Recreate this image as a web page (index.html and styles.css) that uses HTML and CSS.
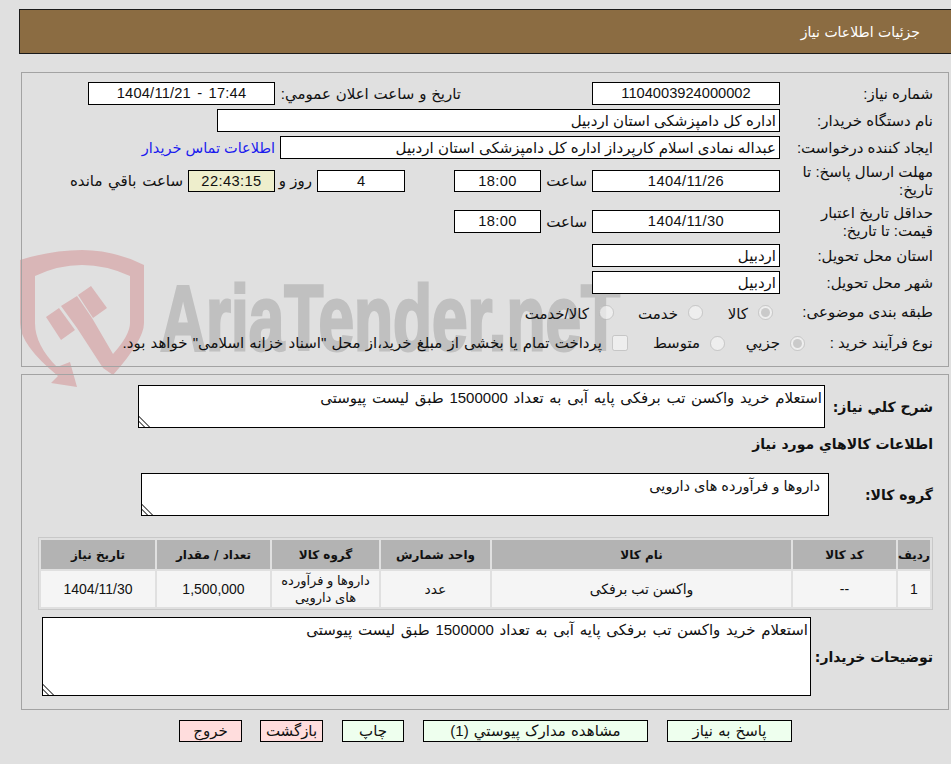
FILE: index.html
```html
<!DOCTYPE html>
<html lang="fa" dir="rtl">
<head>
<meta charset="utf-8">
<title>جزئیات اطلاعات نیاز</title>
<link rel="stylesheet" href="styles.css">
</head>
<body>
<svg class="watermark" width="640" height="160" viewBox="0 240 640 160" aria-hidden="true">
  <g class="wm-shield">
    <path fill-rule="evenodd" d="M20 260 Q52 250 82 250 Q114 250 144 265 V323 Q144 340 113 375 L103 368 L77 328 L61 306 L77 296 L92 318 L113 354 Q130 335 130 323 V276 Q106 265 82 265 Q58 265 35 276 V323 Q35 345 57 367 L70 362 L77 387 L51 383 L58 376 Q20 345 20 323 Z"/>
    <path d="M46 317 L59 308 L75 330 L61 340Z"/>
    <path d="M78 295 L91 286 L107 308 L93 318Z"/>
  </g>
  <text class="wm-text" x="160" y="350" textLength="460" lengthAdjust="spacingAndGlyphs">AriaTender.neT</text>
</svg>

<header class="page-head">جزئیات اطلاعات نیاز</header>

<section class="panel panel-info">
  <div class="row h27">
    <span class="lbl">شماره نیاز:</span>
    <span class="box w188 num">1104003924000002</span>
    <span class="lbl-announce">تاریخ و ساعت اعلان عمومي:</span>
    <span class="box w187 num stamp" dir="ltr">1404/11/21 - 17:44</span>
  </div>
  <div class="row h27">
    <span class="lbl">نام دستگاه خریدار:</span>
    <span class="box w563 start">اداره کل دامپزشکی استان اردبیل</span>
  </div>
  <div class="row h27">
    <span class="lbl">ایجاد کننده درخواست:</span>
    <span class="box w500 start">عبداله نمادی اسلام کارپرداز اداره کل دامپزشکی استان اردبیل</span>
    <a class="contact" href="#">اطلاعات تماس خریدار</a>
  </div>
  <div class="row h40">
    <span class="lbl two">مهلت ارسال پاسخ: تا تاریخ:</span>
    <span class="box w188 short num sp">1404/11/26</span>
    <span class="hour">ساعت</span>
    <span class="box w87 short num sp">18:00</span>
    <span class="box w88 short day num">4</span>
    <span class="dayword">روز و</span>
    <span class="box w87 short timer num sp">22:43:15</span>
    <span class="remain">ساعت باقي مانده</span>
  </div>
  <div class="row h41">
    <span class="lbl two">حداقل تاریخ اعتبار قیمت: تا تاریخ:</span>
    <span class="box w188 num sp">1404/11/30</span>
    <span class="hour">ساعت</span>
    <span class="box w87 num sp">18:00</span>
  </div>
  <div class="row h27">
    <span class="lbl">استان محل تحویل:</span>
    <span class="box w188 start">اردبیل</span>
  </div>
  <div class="row h27">
    <span class="lbl">شهر محل تحویل:</span>
    <span class="box w188 start">اردبیل</span>
  </div>
  <div class="row h32">
    <span class="lbl">طبقه بندی موضوعی:</span>
    <div class="choices cat">
      <label class="choice c-kala"><input type="radio" name="cat" checked disabled><span>کالا</span></label>
      <label class="choice c-service"><input type="radio" name="cat" disabled><span>خدمت</span></label>
      <label class="choice"><input type="radio" name="cat" disabled><span>کالا/خدمت</span></label>
    </div>
  </div>
  <div class="row h30">
    <span class="lbl">نوع فرآیند خرید :</span>
    <div class="choices proc">
      <label class="choice c-small"><input type="radio" name="proc" checked disabled><span>جزیي</span></label>
      <label class="choice c-medium"><input type="radio" name="proc" disabled><span>متوسط</span></label>
      <label class="choice"><input type="checkbox" disabled><span class="treasury">پرداخت تمام یا بخشی از مبلغ خرید،از محل "اسناد خزانه اسلامی" خواهد بود.</span></label>
    </div>
  </div>
</section>

<section class="panel panel-goods">
  <div class="tarow t-desc">
    <label class="blbl">شرح کلي نياز:</label>
    <textarea class="ta ta-desc" readonly>استعلام خرید واکسن تب برفکی پایه آبی به تعداد 1500000 طبق لیست پیوستی</textarea>
  </div>
  <h2 class="goods-title">اطلاعات کالاهاي مورد نياز</h2>
  <div class="tarow t-group">
    <label class="blbl">گروه کالا:</label>
    <textarea class="ta ta-group" readonly>داروها و فرآورده های دارویی</textarea>
  </div>
  <table class="goods">
    <colgroup>
      <col class="c1"><col class="c2"><col class="c3"><col class="c4"><col class="c5"><col class="c6"><col class="c7">
    </colgroup>
    <thead>
      <tr><th>ردیف</th><th>کد کالا</th><th>نام کالا</th><th>واحد شمارش</th><th>گروه کالا</th><th>تعداد / مقدار</th><th>تاریخ نیاز</th></tr>
    </thead>
    <tbody>
      <tr><td>1</td><td>--</td><td>واکسن تب برفکی</td><td>عدد</td><td class="small">داروها و فرآورده های دارویی</td><td>1,500,000</td><td>1404/11/30</td></tr>
    </tbody>
  </table>
  <div class="tarow t-buyer">
    <label class="blbl">توضیحات خریدار:</label>
    <textarea class="ta ta-buyer" readonly>استعلام خرید واکسن تب برفکی پایه آبی به تعداد 1500000 طبق لیست پیوستی</textarea>
  </div>
</section>

<nav class="actions">
  <button class="btn ok b-reply" type="button">پاسخ به نیاز</button>
  <button class="btn ok b-docs" type="button">مشاهده مدارک پیوستي (1)</button>
  <button class="btn ok b-print" type="button">چاپ</button>
  <button class="btn bad b-back" type="button">بازگشت</button>
  <button class="btn bad b-exit" type="button">خروج</button>
</nav>
</body>
</html>
```
FILE: styles.css
```css
* { box-sizing: border-box; }
html, body { margin: 0; padding: 0; }
body {
  position: relative;
  width: 951px;
  height: 764px;
  overflow: hidden;
  background: #e0e0e0;
  color: #111;
  font-family: "Liberation Sans", "DejaVu Sans", sans-serif;
  font-size: 15px;
  line-height: 18px;
}
.watermark { position: absolute; left: 0; top: 240px; z-index: 0; direction: ltr; }
.wm-shield { fill: #d9b6b7; }
.wm-text {
  fill: #c0c0c0;
  stroke: #c0c0c0;
  stroke-width: 3;
  direction: ltr;
  font-family: "Liberation Sans", sans-serif;
  font-weight: 700;
  font-size: 92px;
}

.page-head {
  position: relative;
  margin: 9px 0 0 19px;
  height: 45px;
  padding: 13px 31px 0 0;
  background: #8b6c42;
  border: 1px solid #1a1a1a;
  border-right: 0;
  color: #fff;
  font-family: "DejaVu Sans", sans-serif;
  font-size: 14px;
}
.panel {
  position: relative;
  z-index: 1;
  width: 928px;
  margin-right: 2px;
  border: 1px solid #a3a3a3;
  padding-right: 15px;
}
.panel-info { margin-top: 18px; height: 295px; padding-top: 7px; }
.panel-goods { margin-top: 7px; height: 336px; padding-top: 10px; }

.row { display: flex; align-items: center; }
.h27 { height: 27px; }
.h40 { height: 40px; }
.h41 { height: 41px; }
.h32 { height: 32px; }
.h30 { height: 30px; }
.lbl { flex: 0 0 153px; white-space: nowrap; }
.lbl.two { padding-left: 14px; white-space: normal; }
.box {
  height: 23px;
  background: #fff;
  border: 1px solid #000;
  text-align: center;
  line-height: 21px;
  white-space: nowrap;
  overflow: hidden;
  padding: 0 3px;
}
.box.num { font-size: 14.67px; }
.box.sp { letter-spacing: 0.4px; }
.box.stamp { word-spacing: 2px; letter-spacing: 0.2px; }
.box.short { height: 22px; line-height: 20px; }
.box.start { text-align: right; }
.w188 { width: 188px; }
.w187 { width: 187px; }
.w563 { width: 563px; }
.w500 { width: 500px; }
.w87 { width: 87px; }
.w88 { width: 88px; }
.lbl-announce { margin-right: 131px; width: 186px; white-space: nowrap; word-spacing: 0.6px; }
.contact { margin-right: 5px; color: #1a1aee; font-size: 14.5px; text-decoration: none; white-space: nowrap; }
.hour { width: 51px; padding-right: 5px; }
.day { margin-right: 49px; }
.dayword { width: 42px; padding-right: 5px; white-space: nowrap; }
.timer { background: #eeeecc; }
.remain { margin-right: 5px; white-space: nowrap; word-spacing: 1.5px; }
.choices { display: flex; align-items: center; white-space: nowrap; }
.choice { display: flex; align-items: center; gap: 10px; }
.choice input { margin: 0; width: 15px; height: 15px; flex: none; }
.cat { margin-right: 7px; }
.cat span { padding-top: 3px; }
.c-kala { width: 70px; }
.c-service { width: 89px; }
.proc { margin-right: -25px; }
.c-small { width: 80px; }
.c-medium { width: 97px; }
.proc input[type="checkbox"] { width: 16px; height: 16px; }
.treasury { word-spacing: 1px; }

.tarow { display: flex; align-items: center; }
.blbl { font-weight: 700; white-space: nowrap; font-size: 14px; font-family: "DejaVu Sans", sans-serif; }
.ta {
  display: block;
  background: #fff;
  border: 1px solid #000;
  border-radius: 0;
  color: #111;
  font-family: "Liberation Sans", "DejaVu Sans", sans-serif;
  font-size: 15px;
  line-height: 20px;
  word-spacing: 1.5px;
  padding: 2px;
  outline: none;
  margin: 0;
}
.ta::-webkit-resizer {
  background: linear-gradient(45deg, transparent 0 3px, #777 3px 4.5px, transparent 4.5px 6.5px, #777 6.5px 8px, transparent 8px) left bottom / 11px 11px no-repeat;
}
.t-desc { height: 43px; }
.t-desc .blbl { flex: 0 0 108px; }
.ta-desc { width: 687px; height: 43px; }
.goods-title { margin: 6px 0 0; height: 39px; font-family: "DejaVu Sans", sans-serif; font-size: 14px; line-height: 20px; font-weight: 700; }
.t-group { height: 43px; }
.t-group .blbl { flex: 0 0 104px; }
.ta-group { width: 688px; height: 43px; padding-right: 8px; font-size: 14.5px; word-spacing: 0; }
.goods {
  margin: 21px 0 0 0;
  width: 895px;
  table-layout: fixed;
  border-collapse: separate;
  border-spacing: 2px;
  border: 1px solid #c8c8c8;
  font-size: 14px;
}
.goods th { height: 29px; padding: 0; background: #b3b3b3; font-family: "DejaVu Sans", sans-serif; font-size: 12px; font-weight: 700; }
.goods td { height: 36px; padding: 0 4px; background: #f5f5f5; text-align: center; line-height: 17px; }
.goods td.small { font-size: 13px; }
.c1 { width: 32px; }
.c2 { width: 103px; }
.c3 { width: 299px; }
.c4 { width: 109px; }
.c5 { width: 107px; }
.c6 { width: 113px; }
.c7 { width: 114px; }
.t-buyer { height: 79px; margin-top: 7px; }
.t-buyer .blbl { flex: 0 0 122px; }
.ta-buyer { width: 769px; height: 79px; }

.actions { position: relative; z-index: 1; display: flex; margin: 10px 159px 0 0; gap: 19px; }
.btn {
  height: 22px;
  border: 1px solid #000;
  border-radius: 0;
  padding: 0;
  color: #111;
  font-family: "Liberation Sans", "DejaVu Sans", sans-serif;
  font-size: 15px;
  line-height: 18px;
  word-spacing: 1px;
}
.ok { background: #eeffee; }
.bad { background: #ffdddd; }
.b-reply { width: 125px; }
.b-docs { width: 225px; }
.b-print { width: 62px; }
.b-back { width: 63px; }
.b-exit { width: 63px; margin-right: -1px; }
```
